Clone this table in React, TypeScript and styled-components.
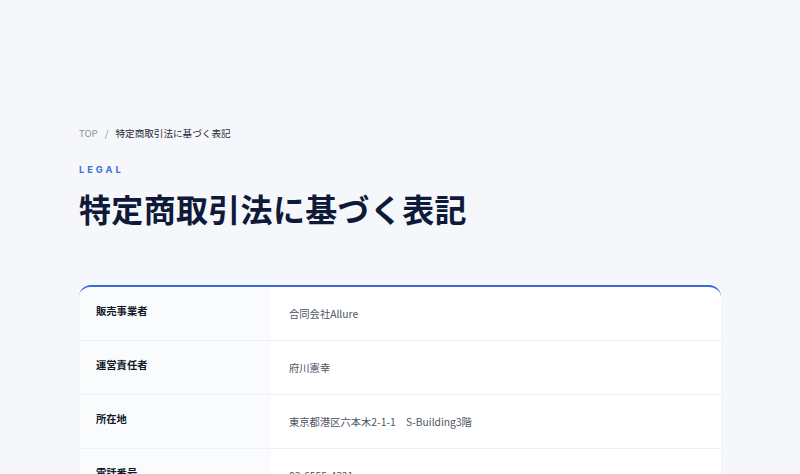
import React from 'react';
import styled, { createGlobalStyle } from 'styled-components';

const GlobalStyle = createGlobalStyle`
  body {
    margin: 0;
    background: #f5f7fb;
    font-family: 'Noto Sans CJK JP', 'Noto Sans', sans-serif;
  }
`;

const Page = styled.main`
  max-width: 642px;
  margin: 0 auto;
  padding: 124px 0 60px;
`;

const Breadcrumb = styled.nav`
  display: flex;
  align-items: center;
  gap: 7px;
  font-size: 9.6px;
  line-height: 18px;
  color: #1f2937;
`;

const Crumb = styled.span<{ $muted?: boolean }>`
  color: ${(p) => (p.$muted ? '#8b93a3' : '#1f2937')};
`;

const Eyebrow = styled.p`
  margin: 18px 0 0;
  font-family: 'Inter', 'Noto Sans', sans-serif;
  font-size: 9.3px;
  font-weight: 700;
  letter-spacing: 0.32em;
  color: #3b6fdc;
  line-height: 20px;
`;

const Title = styled.h1`
  margin: 4px 0 0;
  font-size: 32px;
  font-weight: 700;
  line-height: 48px;
  letter-spacing: 0.01em;
  color: #0f1a3a;
`;

const Card = styled.section`
  margin-top: 53px;
  background: #fff;
  border-top: 2px solid #3a6ad6;
  border-radius: 12px 12px 0 0;
  box-shadow: 0 1px 3px rgba(15, 26, 58, 0.04);
  overflow: hidden;
`;

const Row = styled.div`
  display: grid;
  grid-template-columns: 192px 1fr;
  border-bottom: 1px solid #edf0f4;
`;

const Label = styled.div`
  background: #f9fbfd;
  padding: 15px 17px;
  font-size: 10.3px;
  font-weight: 700;
  line-height: 18px;
  color: #111827;
`;

const Value = styled.div`
  padding: 18px 18px 17px;
  font-size: 10.3px;
  line-height: 18px;
  color: #4b5563;
`;

const rows = [
  ['販売事業者', '合同会社Allure'],
  ['運営責任者', '府川憲幸'],
  ['所在地', '東京都港区六本木2-1-1\u3000S-Building3階'],
  ['電話番号', '03-6555-4321'],
  ['メールアドレス', 'info@allure.jp'],
];

export default function App() {
  return (
    <>
      <GlobalStyle />
      <Page>
        <Breadcrumb>
          <Crumb $muted>TOP</Crumb>
          <Crumb $muted>/</Crumb>
          <Crumb>特定商取引法に基づく表記</Crumb>
        </Breadcrumb>
        <Eyebrow>LEGAL</Eyebrow>
        <Title>特定商取引法に基づく表記</Title>
        <Card>
          {rows.map(([k, v]) => (
            <Row key={k}>
              <Label>{k}</Label>
              <Value>{v}</Value>
            </Row>
          ))}
        </Card>
      </Page>
    </>
  );
}
